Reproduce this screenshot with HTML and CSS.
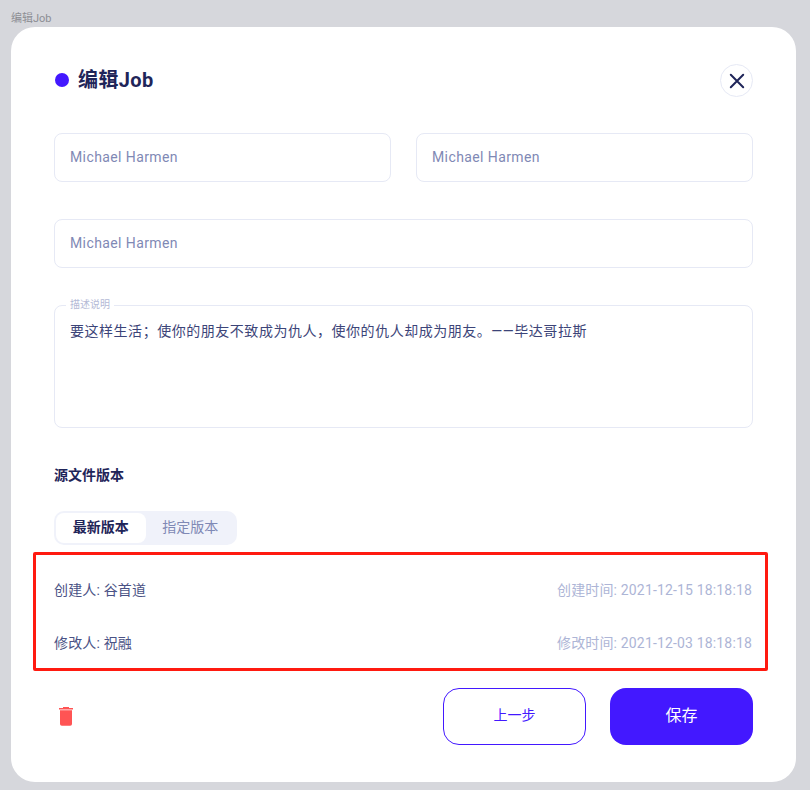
FILE: index.html
```html
<!DOCTYPE html>
<html lang="zh-CN">
<head>
    <meta charset="UTF-8">
    <meta name="viewport" content="width=device-width, initial-scale=1.0">
    <title>编辑Job</title>
    <link rel="stylesheet" href="styles.css">
</head>
<body>

    <div class="page-label">编辑Job</div>

    <div class="modal">
        <!-- Header -->
        <div class="modal-header">
            <div class="modal-title">
                <span class="title-dot"></span>
                <h1>编辑Job</h1>
            </div>
            <button class="close-btn" type="button" aria-label="关闭">
                <svg width="16" height="16" viewBox="0 0 16 16">
                    <path d="M1.8 1.8 L14.2 14.2 M14.2 1.8 L1.8 14.2" stroke="#1f2559" stroke-width="2" stroke-linecap="round" fill="none"/>
                </svg>
            </button>
        </div>

        <!-- Form -->
        <div class="field-row">
            <input class="field" type="text" value="Michael Harmen">
            <input class="field" type="text" value="Michael Harmen">
        </div>
        <div class="field-row">
            <input class="field" type="text" value="Michael Harmen">
        </div>
        <div class="desc-box">
            <span class="desc-label">描述说明</span>
            <p class="desc-text">要这样生活；使你的朋友不致成为仇人，使你的仇人却成为朋友。——毕达哥拉斯</p>
        </div>

        <h2 class="section-title">源文件版本</h2>
        <div class="tabs">
            <span class="tab active">最新版本</span>
            <span class="tab">指定版本</span>
        </div>

        <!-- Created / modified info -->
        <div class="info-box">
            <div class="info-row">
                <span class="info-name">创建人: 谷首道</span>
                <span class="info-time">创建时间: 2021-12-15 18:18:18</span>
            </div>
            <div class="info-row">
                <span class="info-name">修改人: 祝融</span>
                <span class="info-time">修改时间: 2021-12-03 18:18:18</span>
            </div>
        </div>

        <!-- Footer -->
        <div class="modal-footer">
            <svg class="trash" width="14" height="19" viewBox="0 0 14 19" aria-label="删除">
                <path d="M4 0 H10 V1 H14 V2.6 H0 V1 H4 Z" fill="#ff5454"/>
                <path d="M1 3.3 H13 V17 A1.8 1.8 0 0 1 11.2 18.8 H2.8 A1.8 1.8 0 0 1 1 17 Z" fill="#ff5454"/>
            </svg>
            <div class="footer-btns">
                <button class="btn btn-outline" type="button">上一步</button>
                <button class="btn btn-primary" type="button">保存</button>
            </div>
        </div>
    </div>

</body>
</html>
```

FILE: styles.css
```css
* {
    box-sizing: border-box;
}

body {
    margin: 0;
    height: 790px;
    overflow: hidden;
    background-color: #d6d7dc;
    font-family: Roboto, "Noto Sans CJK SC", sans-serif;
    color: #1f2559;
}

.page-label {
    height: 27px;
    padding: 12px 0 0 11px;
    font-size: 11px;
    line-height: 14px;
    color: #8d8e94;
}

.modal {
    width: 785px;
    height: 755px;
    margin-left: 11px;
    padding: 37px 43px 0;
    background: #ffffff;
    border-radius: 24px;
}

.modal-header {
    display: flex;
    justify-content: space-between;
    align-items: center;
    height: 33px;
    margin-bottom: 36px;
}

.modal-title {
    display: flex;
    align-items: center;
    gap: 9px;
}

.modal-title h1 {
    margin: 0;
    font-size: 20px;
    font-weight: 700;
    line-height: 33px;
    letter-spacing: 0.4px;
}

.title-dot {
    width: 14px;
    height: 14px;
    margin: 0 0 1px 1px;
    border-radius: 50%;
    background: #4318ff;
}

.close-btn {
    display: flex;
    align-items: center;
    justify-content: center;
    width: 33px;
    height: 33px;
    padding: 0;
    background: #fff;
    border: 1px solid #e6e9f5;
    border-radius: 50%;
}

.field-row {
    display: flex;
    gap: 25px;
    margin-bottom: 37px;
}

.field {
    flex: 1;
    min-width: 0;
    height: 49px;
    padding: 0 15px 2px;
    font-family: inherit;
    font-size: 14px;
    letter-spacing: 0.4px;
    color: #7f89b5;
    background: #fff;
    border: 1px solid #e6e9f5;
    border-radius: 8px;
    outline: none;
}

.desc-box {
    position: relative;
    height: 123px;
    padding: 15px;
    border: 1px solid #e6e9f5;
    border-radius: 8px;
}

.desc-label {
    position: absolute;
    top: -7px;
    left: 11px;
    padding: 0 4px;
    font-size: 10px;
    line-height: 12px;
    color: #b4bad6;
    background: #fff;
}

.desc-text {
    margin: 0;
    font-size: 14px;
    line-height: 20px;
    letter-spacing: 0.53px;
    color: #3c4478;
}

.section-title {
    margin: 37px 0 26px;
    font-size: 14px;
    font-weight: 700;
    line-height: 20px;
}

.tabs {
    display: flex;
    width: 183px;
    height: 34px;
    padding: 2px;
    background: #f0f2fa;
    border-radius: 10px;
}

.tab {
    width: 90px;
    padding-bottom: 1px;
    font-size: 14px;
    line-height: 29px;
    text-align: center;
    color: #7f89b5;
}

.tab.active {
    font-weight: 700;
    color: #1f2559;
    background: #fff;
    border-radius: 8px;
}

.info-box {
    height: 119px;
    margin: 7px -15px 0 -21px;
    padding: 7px 13px 0 18px;
    border: 3px solid #ff1a10;
    border-radius: 2px;
}

.info-row {
    display: flex;
    justify-content: space-between;
    align-items: center;
    height: 53px;
    font-size: 14px;
    letter-spacing: 0.16px;
}

.info-name {
    color: #4a5285;
}

.info-time {
    color: #adb5d6;
}

.modal-footer {
    display: flex;
    justify-content: space-between;
    align-items: center;
    margin-top: 17px;
}

.trash {
    margin-left: 5px;
}

.footer-btns {
    display: flex;
    gap: 24px;
}

.btn {
    height: 57px;
    width: 143px;
    padding: 0 0 5px;
    font-family: inherit;
    border-radius: 16px;
}

.btn-outline {
    font-size: 14px;
    color: #4318ff;
    background: #fff;
    border: 1px solid #4318ff;
}

.btn-primary {
    font-size: 16px;
    color: #fff;
    background: #4318ff;
    border: none;
}
```
